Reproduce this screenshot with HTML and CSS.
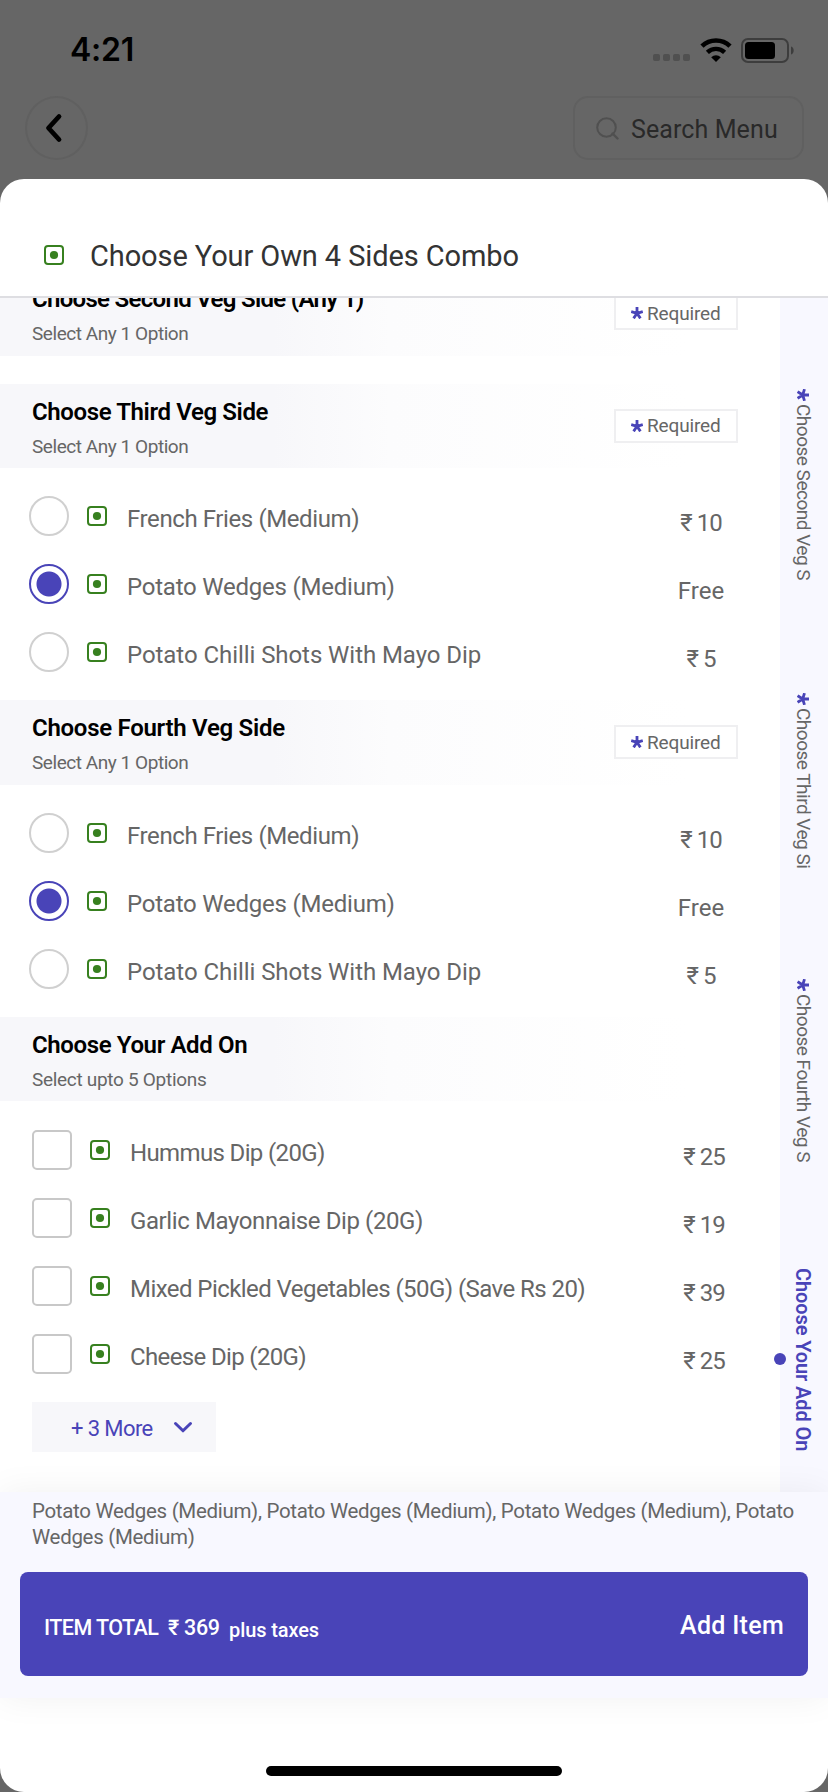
FILE: index.html
```html
<!DOCTYPE html>
<html lang="en">

<head>
    <meta charset="UTF-8">
    <meta name="viewport" content="width=device-width, initial-scale=1.0">
    <title>Choose Your Own 4 Sides Combo</title>
    <link rel="stylesheet" href="styles.css">
</head>

<body>
    <svg class="sprite">
        <symbol id="veg" viewBox="0 0 20 20">
            <rect x="1" y="1" width="18" height="18" rx="3" fill="none" stroke="#37801f" stroke-width="2" />
            <circle cx="10" cy="10" r="4.1" fill="#37801f" />
        </symbol>
        <symbol id="star" viewBox="0 0 12 12">
            <path d="M6 6.3V0M6 6.3L.2 4.5M6 6.3L11.8 4.5M6 6.3L2.6 11.400M6 6.3L9.4 11.400" fill="none" stroke="#4944b8" stroke-width="2.800" />
        </symbol>
    </svg>

    <div class="screen">
        <div class="status">
            <span class="time">4:21</span>
            <div class="status-icons">
                <div class="dots"><i></i><i></i><i></i><i></i></div>
                <svg class="wifi" width="32" height="24" viewBox="0 0 32 24">
                    <path d="M2 8.2a20 20 0 0 1 28 0" fill="none" stroke="#000" stroke-width="4.6" />
                    <path d="M7.4 14.4a12.3 12.3 0 0 1 17.2 0" fill="none" stroke="#000" stroke-width="4.4" />
                    <path d="M11.2 19.2a7 7 0 0 1 9.6 0L16 24z" />
                </svg>
                <svg class="battery" width="54" height="25" viewBox="0 0 54 25">
                    <rect x="1" y="1" width="46" height="23" rx="6" fill="none" stroke="#3d3d3d" stroke-width="2" />
                    <rect x="4" y="4" width="30" height="17" rx="3.5" />
                    <path d="M50 8.5c3.600 1 3.600 7 0 8z" fill="#3d3d3d" />
                </svg>
            </div>
        </div>

        <div class="topbar">
            <div class="back">
                <svg width="18" height="30" viewBox="0 0 18 30">
                    <path d="M14 3.500L3.500 15L14 26.500" fill="none" stroke="#000" stroke-width="4.800" stroke-linecap="round" stroke-linejoin="round" />
                </svg>
            </div>
            <div class="search">
                <svg width="23" height="23" viewBox="0 0 23 23">
                    <circle cx="10.500" cy="10.500" r="9.300" fill="none" stroke="#505050" stroke-width="2" />
                    <path d="M16.500 16.500l5 5" stroke="#505050" stroke-width="2.400" stroke-linecap="round" />
                </svg>
                <span>Search Menu</span>
            </div>
        </div>

        <div class="sheet">
            <div class="sheet-title">
                <svg class="veg"><use href="#veg" /></svg>
                <h1>Choose Your Own 4 Sides Combo</h1>
            </div>

            <div class="content">
                <div class="groups">
                    <div class="group-head first">
                        <div>
                            <h2 class="tight">Choose Second Veg Side (Any 1)</h2>
                            <p>Select Any 1 Option</p>
                        </div>
                        <div class="required"><svg class="star"><use href="#star" /></svg>Required</div>
                    </div>

                    <div class="group-head">
                        <div>
                            <h2>Choose Third Veg Side</h2>
                            <p>Select Any 1 Option</p>
                        </div>
                        <div class="required"><svg class="star"><use href="#star" /></svg>Required</div>
                    </div>
                    <div class="options">
                        <div class="option">
                            <span class="radio"></span>
                            <svg class="veg"><use href="#veg" /></svg>
                            <span class="name snug">French Fries (Medium)</span>
                            <span class="price">₹ 10</span>
                        </div>
                        <div class="option">
                            <span class="radio checked"></span>
                            <svg class="veg"><use href="#veg" /></svg>
                            <span class="name">Potato Wedges (Medium)</span>
                            <span class="price free">Free</span>
                        </div>
                        <div class="option">
                            <span class="radio"></span>
                            <svg class="veg"><use href="#veg" /></svg>
                            <span class="name loose">Potato Chilli Shots With Mayo Dip</span>
                            <span class="price">₹ 5</span>
                        </div>
                    </div>

                    <div class="group-head">
                        <div>
                            <h2 class="wide">Choose Fourth Veg Side</h2>
                            <p>Select Any 1 Option</p>
                        </div>
                        <div class="required"><svg class="star"><use href="#star" /></svg>Required</div>
                    </div>
                    <div class="options">
                        <div class="option">
                            <span class="radio"></span>
                            <svg class="veg"><use href="#veg" /></svg>
                            <span class="name snug">French Fries (Medium)</span>
                            <span class="price">₹ 10</span>
                        </div>
                        <div class="option">
                            <span class="radio checked"></span>
                            <svg class="veg"><use href="#veg" /></svg>
                            <span class="name">Potato Wedges (Medium)</span>
                            <span class="price free">Free</span>
                        </div>
                        <div class="option">
                            <span class="radio"></span>
                            <svg class="veg"><use href="#veg" /></svg>
                            <span class="name loose">Potato Chilli Shots With Mayo Dip</span>
                            <span class="price">₹ 5</span>
                        </div>
                    </div>

                    <div class="group-head">
                        <div>
                            <h2>Choose Your Add On</h2>
                            <p class="upto">Select upto 5 Options</p>
                        </div>
                    </div>
                    <div class="options addons">
                        <div class="option">
                            <span class="checkbox"></span>
                            <svg class="veg"><use href="#veg" /></svg>
                            <span class="name tight">Hummus Dip (20G)</span>
                            <span class="price">₹ 25</span>
                        </div>
                        <div class="option">
                            <span class="checkbox"></span>
                            <svg class="veg"><use href="#veg" /></svg>
                            <span class="name snug">Garlic Mayonnaise Dip (20G)</span>
                            <span class="price">₹ 19</span>
                        </div>
                        <div class="option">
                            <span class="checkbox"></span>
                            <svg class="veg"><use href="#veg" /></svg>
                            <span class="name long">Mixed Pickled Vegetables (50G) (Save Rs 20)</span>
                            <span class="price">₹ 39</span>
                        </div>
                        <div class="option">
                            <span class="checkbox"></span>
                            <svg class="veg"><use href="#veg" /></svg>
                            <span class="name tight">Cheese Dip (20G)</span>
                            <span class="price">₹ 25</span>
                        </div>
                    </div>
                    <div class="more">
                        <span>+ 3 More</span>
                        <svg width="20" height="13" viewBox="0 0 20 13">
                            <path d="M2.500 2.500L10 9.800L17.500 2.500" fill="none" stroke="#4944b8" stroke-width="3" stroke-linecap="round" stroke-linejoin="round" />
                        </svg>
                    </div>
                </div>

                <div class="rail">
                    <div class="rail-item"><svg class="star"><use href="#star" /></svg>Choose Second Veg S</div>
                    <div class="rail-item"><svg class="star"><use href="#star" /></svg>Choose Third Veg Si</div>
                    <div class="rail-item"><svg class="star"><use href="#star" /></svg>Choose Fourth Veg S</div>
                    <div class="rail-item active">Choose Your Add On</div>
                </div>
            </div>

            <div class="footer">
                <p class="summary">Potato Wedges (Medium), Potato Wedges (Medium), Potato Wedges (Medium), Potato Wedges (Medium)</p>
                <div class="add-button">
                    <div class="total">
                        <span class="total-label">ITEM TOTAL</span>
                        <span class="total-price">₹ 369</span>
                        <span class="taxes">plus taxes</span>
                    </div>
                    <span class="add">Add Item</span>
                </div>
            </div>
            <div class="home"></div>
        </div>
    </div>
</body>

</html>
```
FILE: styles.css
```css
* {
    box-sizing: border-box;
}

body {
    margin: 0;
    background-color: #666;
    font-family: Roboto, "Liberation Sans", sans-serif;
    color: #666;
}

h1, h2, p {
    margin: 0;
}

svg {
    display: block;
    flex: none;
}

.sprite {
    position: absolute;
    width: 0;
    height: 0;
}

.screen {
    width: 828px;
    height: 1792px;
    display: flex;
    flex-direction: column;
    overflow: hidden;
}

/* status bar */
.status {
    height: 96px;
    padding: 4px 33px 0 70px;
    display: flex;
    align-items: center;
    justify-content: space-between;
}

.time {
    font: 600 32px/38px Inter, sans-serif;
    letter-spacing: -0.2px;
    color: #000;
}

.status-icons {
    display: flex;
    align-items: center;
}

.dots {
    display: flex;
    gap: 3px;
    padding-top: 15px;
    margin-right: 10px;
}

.dots i {
    width: 7px;
    height: 7px;
    border-radius: 2px;
    background-color: #505050;
}

.wifi {
    margin-right: 9px;
}

/* top bar */
.topbar {
    height: 83px;
    padding: 0 24px 0 25px;
    display: flex;
    justify-content: space-between;
}

.back {
    width: 63px;
    height: 64px;
    border: 2px solid #606060;
    border-radius: 50%;
    display: flex;
    align-items: center;
    justify-content: center;
    padding-right: 5px;
}

.search {
    width: 231px;
    height: 64px;
    border: 2px solid #606060;
    border-radius: 15px;
    padding-left: 21px;
    display: flex;
    align-items: center;
    gap: 12px;
    font-size: 25px;
    letter-spacing: 0.1px;
    color: #292929;
}

.search span {
    padding-top: 2px;
}

/* bottom sheet */
.sheet {
    height: 1613px;
    border-radius: 24px;
    background-color: #fff;
    display: flex;
    flex-direction: column;
    overflow: hidden;
}

.sheet-title {
    height: 119px;
    padding: 56px 44px 0;
    border-bottom: 2px solid #dedee2;
    display: flex;
    gap: 26px;
}

.sheet-title h1 {
    font-weight: 400;
    font-size: 29px;
    line-height: 42px;
    letter-spacing: -0.1px;
    color: #333;
}

.veg {
    width: 20px;
    height: 20px;
}

.sheet-title .veg {
    margin-top: 10px;
}

.star {
    width: 12px;
    height: 12px;
}

.content {
    height: 1194px;
    display: flex;
    overflow: hidden;
}

.groups {
    width: 780px;
    margin-top: -27px;
}

.group-head {
    height: 84.5px;
    padding: 0 42px 0 32px;
    background: linear-gradient(to right, #f7f7fa 0, #f7f7fa 35%, #fcfcfd 50%, #fff 88%);
    display: flex;
    align-items: center;
    justify-content: space-between;
}

.group-head.first {
    margin-bottom: 28px;
}

.group-head h2 {
    padding-top: 5px;
    font-weight: 600;
    font-size: 24px;
    line-height: 28px;
    letter-spacing: -0.38px;
    color: #000;
}

.group-head h2.tight {
    letter-spacing: -0.7px;
}

.group-head h2.wide {
    letter-spacing: -0.28px;
}

.group-head p {
    margin-top: 9px;
    font-size: 19px;
    line-height: 24px;
    letter-spacing: -0.45px;
}

.group-head .upto {
    letter-spacing: -0.3px;
}

.required {
    width: 124px;
    height: 34px;
    border: 2px solid #efeff1;
    background-color: #fff;
    padding-left: 15px;
    display: flex;
    align-items: center;
    gap: 4px;
    font-size: 19px;
    letter-spacing: -0.15px;
}

.options {
    padding: 14px 0 14px 29px;
}

.option {
    height: 68px;
    display: flex;
    align-items: center;
}

.radio {
    width: 40px;
    height: 40px;
    border: 2px solid #d0d0d0;
    border-radius: 50%;
}

.radio.checked {
    border-color: #4944b8;
    background: radial-gradient(circle, #4944b8 12px, #fff 13px);
}

.checkbox {
    width: 40px;
    height: 40px;
    border: 2px solid #c8c8c8;
    border-radius: 5px;
}

.option .veg {
    margin: 0 20px 0 18px;
}

.name {
    flex: 1;
    padding-top: 6px;
    font-size: 24px;
    letter-spacing: -0.22px;
    white-space: nowrap;
}

.name.loose {
    letter-spacing: -0.06px;
}

.name.snug {
    letter-spacing: -0.4px;
}

.name.long {
    letter-spacing: -0.56px;
}

.name.tight {
    letter-spacing: -0.64px;
}

.price {
    width: 100px;
    margin-right: 29px;
    padding-top: 14px;
    font-size: 24px;
    letter-spacing: -1px;
    text-align: center;
}

.price.free {
    letter-spacing: 0;
}

.addons {
    padding: 15px 0 14px 32px;
}

.addons .price {
    margin-right: 26px;
}

.more {
    width: 184px;
    height: 50px;
    margin-left: 32px;
    padding-left: 39px;
    background-color: #f7f7fa;
    display: flex;
    align-items: center;
    gap: 20px;
    font-size: 22px;
    letter-spacing: -0.6px;
    color: #4944b8;
}

.more span {
    padding-top: 2px;
}

/* vertical category rail */
.rail {
    width: 48px;
    padding: 91px 2px 0 0;
    background-color: #f8f8ff;
    display: grid;
    grid-template-rows: 304px 286px 289px 182px;
}

.rail-item {
    writing-mode: vertical-rl;
    display: flex;
    align-items: center;
    gap: 3px;
    font-size: 19px;
    letter-spacing: -0.5px;
    white-space: nowrap;
}

.rail-item .star {
    transform: rotate(90deg);
}

.rail-item.active {
    position: relative;
    font-weight: 600;
    font-size: 20px;
    letter-spacing: -0.1px;
    color: #4944b8;
}

.rail-item.active::before {
    content: '';
    position: absolute;
    left: -6px;
    top: 85px;
    width: 12px;
    height: 12px;
    border-radius: 50%;
    background-color: #4944b8;
}

/* footer */
.footer {
    position: relative;
    height: 206px;
    padding: 6px 20px 0;
    background-color: #f8f8ff;
    box-shadow: 0 0 34px rgba(0, 0, 0, 0.06);
}

.summary {
    padding: 0 8px 0 12px;
    font-size: 20.5px;
    line-height: 26px;
    letter-spacing: -0.31px;
}

.add-button {
    height: 104px;
    margin-top: 22px;
    padding: 0 24px;
    border-radius: 8px;
    background-color: #4944b8;
    display: flex;
    align-items: center;
    justify-content: space-between;
    font-weight: 500;
    color: #fff;
}

.total {
    display: flex;
    padding-top: 10px;
    font-size: 21.5px;
    line-height: 26px;
}

.total-label {
    width: 124px;
    letter-spacing: -0.55px;
}

.total-price {
    width: 61px;
    letter-spacing: -0.3px;
}

.taxes {
    padding-top: 2px;
    font-size: 20px;
    letter-spacing: -0.1px;
}

.add {
    padding-top: 3px;
    font-size: 25px;
    letter-spacing: 0.3px;
}

.home {
    width: 296px;
    height: 10px;
    margin: 68px auto 0;
    border-radius: 5px;
    background-color: #000;
}
```
